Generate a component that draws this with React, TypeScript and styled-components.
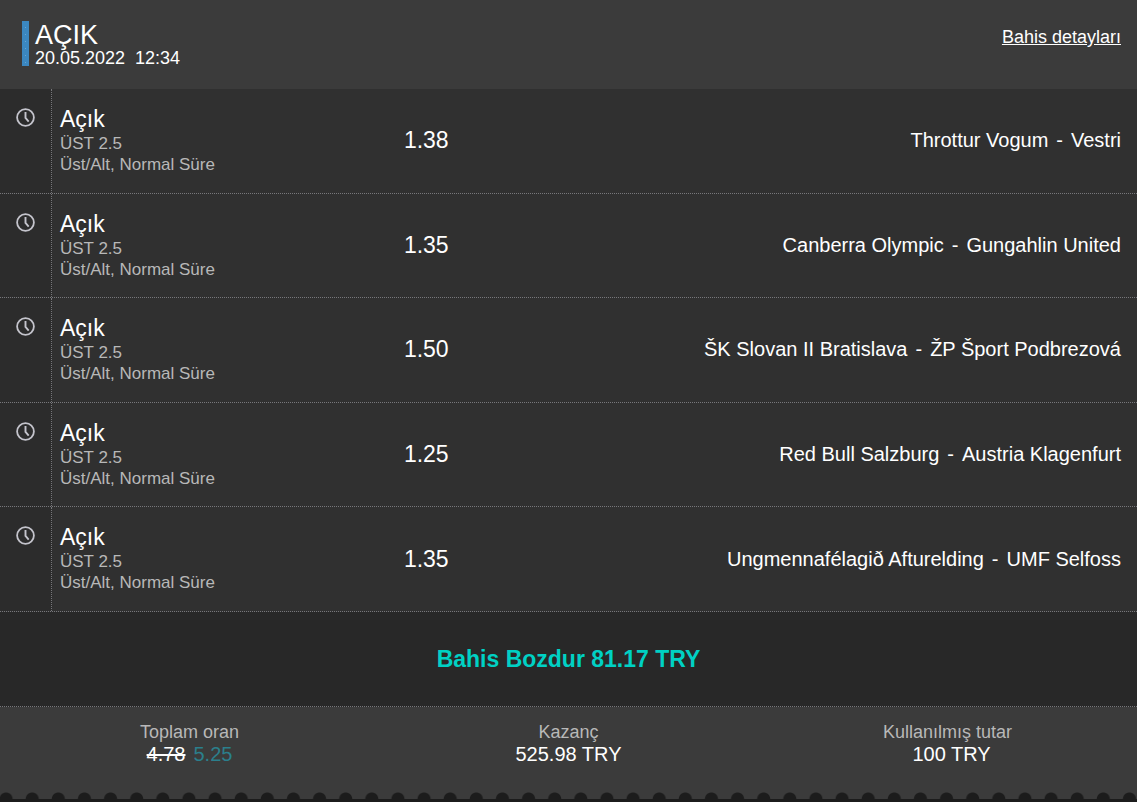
import React from "react";
import styled, { createGlobalStyle } from "styled-components";

const GlobalStyle = createGlobalStyle`
  * {
    box-sizing: border-box;
  }
  body {
    margin: 0;
    background: #1c1c1c;
    color: #ffffff;
    font-family: Arial, "Liberation Sans", sans-serif;
  }
`;

const Slip = styled.main`
  display: flex;
  flex-direction: column;
  padding-bottom: 3px;
`;

const Header = styled.header`
  display: flex;
  justify-content: space-between;
  align-items: flex-start;
  padding: 21px 16px 21px 22px;
  background: #3b3b3b;
`;

const HeaderMain = styled.div`
  display: flex;
  align-items: flex-start;
  gap: 6px;
`;

const StatusBar = styled.span`
  width: 7px;
  height: 45px;
  padding: 6px 3px 3px;
  background: #3b87c0;

  &::before {
    content: "";
    display: block;
    height: 36px;
    background: repeating-linear-gradient(#62a5d6 0 1px, transparent 1px 7px);
  }
`;

const Title = styled.h1`
  margin: 0;
  font-size: 27px;
  font-weight: 400;
  line-height: 28px;
`;

const PlacedAt = styled.time`
  display: block;
  font-size: 18px;
  line-height: 19px;
  white-space: pre;
`;

const DetailsLink = styled.a`
  margin-top: 5px;
  color: #ffffff;
  font-size: 18px;
  line-height: 22px;
  text-decoration: underline;
`;

const Selections = styled.ul`
  display: grid;
  grid-auto-rows: 1fr;
  min-height: 523px;
  margin: 0;
  padding: 0;
  list-style: none;
`;

const Selection = styled.li`
  display: grid;
  grid-template-columns: 52px 12fr 25fr;
  background: #303030;
  border-bottom: 1px dotted #77777b;
`;

const StateCell = styled.div`
  padding: 19px 0 0 16px;
  background: #2c2c2c;
  border-right: 1px dotted #77777b;
`;

const ClockSvg = styled.svg`
  display: block;
  width: 19px;
  height: 19px;
`;

const Pick = styled.div`
  padding: 16px 8px;
`;

const PickState = styled.div`
  font-size: 23px;
  line-height: 28px;
`;

const PickInfo = styled.div`
  color: #b8b8b8;
  font-size: 17px;
  line-height: 21px;
`;

const Match = styled.div`
  display: flex;
  align-items: center;
  justify-content: space-between;
  padding: 0 16px 1px 0;
`;

const Odds = styled.span`
  font-size: 23px;
  line-height: 28px;
`;

const Teams = styled.span`
  display: flex;
  gap: 8px;
  font-size: 20px;
  line-height: 24px;
`;

const CashOut = styled.button`
  width: 100%;
  height: 95px;
  padding: 0;
  border: 0;
  border-bottom: 1px dotted #77777b;
  background: #282828;
  color: #00d1c4;
  font: bold 23px / 28px Arial, "Liberation Sans", sans-serif;
  cursor: pointer;
`;

const Summary = styled.dl`
  display: grid;
  grid-template-columns: repeat(3, 1fr);
  margin: 0;
  padding: 14px 0 27px;
  background: #3b3b3b;
  text-align: center;
`;

const Label = styled.dt`
  color: #b8b8b8;
  font-size: 18px;
  line-height: 22px;
`;

const Value = styled.dd<{ $inset?: boolean }>`
  margin: 0;
  padding-left: ${(p) => (p.$inset ? "8px" : "0")};
  font-size: 20px;
  line-height: 22px;
`;

const BoostedOdds = styled.span`
  margin-left: 8px;
  color: #2b7f8c;
`;

const Perforation = styled.div`
  height: 7px;
  background: #3b3b3b radial-gradient(circle at 50% 100%, #1c1c1c 6px, transparent 7px) -7px 0 /
    calc(100% / 43.5) 100%;
`;

function ClockIcon() {
  return (
    <ClockSvg viewBox="0 0 19 19" fill="none" stroke="#c4c4cc" role="img" aria-label="Açık">
      <circle cx="9.5" cy="9.5" r="8.4" strokeWidth="1.8" />
      <path d="M9.5 4v6l3.2 3.6" strokeWidth="1.9" />
    </ClockSvg>
  );
}

const selections = [
  { odds: "1.38", home: "Throttur Vogum", away: "Vestri" },
  { odds: "1.35", home: "Canberra Olympic", away: "Gungahlin United" },
  { odds: "1.50", home: "ŠK Slovan II Bratislava", away: "ŽP Šport Podbrezová" },
  { odds: "1.25", home: "Red Bull Salzburg", away: "Austria Klagenfurt" },
  { odds: "1.35", home: "Ungmennafélagið Afturelding", away: "UMF Selfoss" },
];

export default function App() {
  return (
    <>
      <GlobalStyle />
      <Slip lang="tr">
        <Header>
          <HeaderMain>
            <StatusBar />
            <div>
              <Title>AÇIK</Title>
              <PlacedAt dateTime="2022-05-20T12:34">{"20.05.2022  12:34"}</PlacedAt>
            </div>
          </HeaderMain>
          <DetailsLink href="#details">Bahis detayları</DetailsLink>
        </Header>

        <Selections>
          {selections.map((s) => (
            <Selection key={s.home}>
              <StateCell>
                <ClockIcon />
              </StateCell>
              <Pick>
                <PickState>Açık</PickState>
                <PickInfo>ÜST 2.5</PickInfo>
                <PickInfo>Üst/Alt, Normal Süre</PickInfo>
              </Pick>
              <Match>
                <Odds>{s.odds}</Odds>
                <Teams>
                  <span>{s.home}</span>
                  <span>-</span>
                  <span>{s.away}</span>
                </Teams>
              </Match>
            </Selection>
          ))}
        </Selections>

        <CashOut type="button">Bahis Bozdur 81.17 TRY</CashOut>

        <Summary>
          <div>
            <Label>Toplam oran</Label>
            <Value>
              <s>4.78</s>
              <BoostedOdds>5.25</BoostedOdds>
            </Value>
          </div>
          <div>
            <Label>Kazanç</Label>
            <Value>525.98 TRY</Value>
          </div>
          <div>
            <Label>Kullanılmış tutar</Label>
            <Value $inset>100 TRY</Value>
          </div>
        </Summary>
        <Perforation />
      </Slip>
    </>
  );
}
